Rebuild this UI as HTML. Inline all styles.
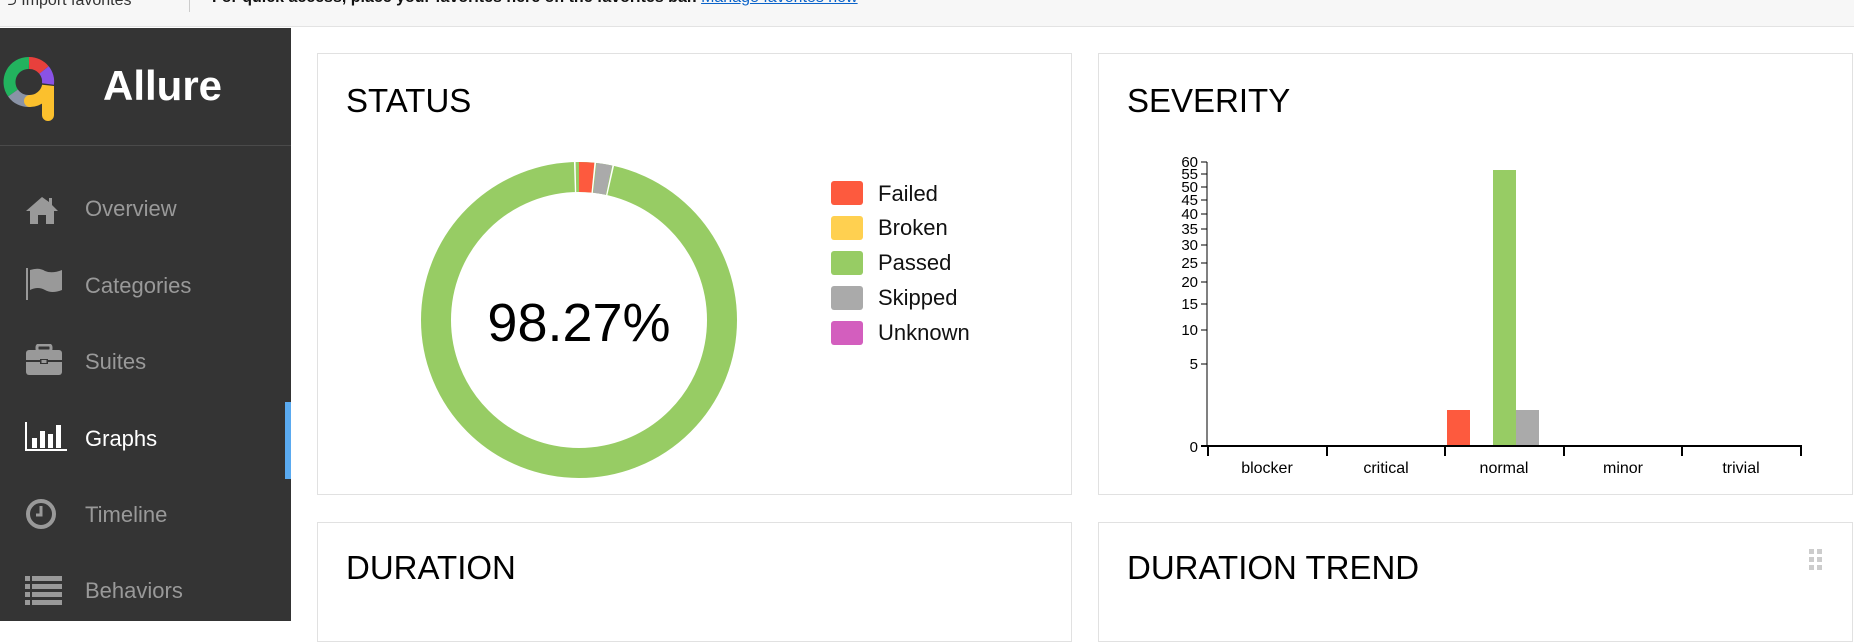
<!DOCTYPE html>
<html><head><meta charset="utf-8"><style>
*{margin:0;padding:0;box-sizing:border-box}
body{width:1854px;height:621px;overflow:hidden;background:#fff;font-family:"Liberation Sans",Arial,sans-serif;position:relative}
.top{position:absolute;left:0;top:0;width:1854px;height:27px;background:#f7f7f7;border-bottom:1px solid #e3e3e3;font-size:16px;color:#111}
.side{position:absolute;left:0;top:28px;width:291px;height:593px;background:#343434}
.nav{position:absolute;left:85px;font-size:22px;color:#999}
.card{position:absolute;border:1px solid #e1e1e1;background:#fff}
.title{position:absolute;left:28px;font-size:33px;color:#000}
.leg{position:absolute;left:831px;width:32px;height:24px;border-radius:3px}
.lt{position:absolute;left:878px;font-size:22px;color:#111}
</style></head><body>
<div class="top">
<div style="position:absolute;left:4px;top:-11px;color:#333">&#x2b8c; Import favorites</div>
<div style="position:absolute;left:189px;top:0;width:1px;height:12px;background:#ccc"></div>
<div style="position:absolute;left:212px;top:-11px;font-weight:bold">For quick access, place your favorites here on the favorites bar. <span style="color:#0b63c9;text-decoration:underline;font-weight:normal">Manage favorites now</span></div>
</div>
<div class="side">
<svg style="position:absolute;left:0;top:0" width="80" height="110" viewBox="0 28 80 110">
<path d="M29 63 A19 19 0 0 0 13 93" stroke="#22b35e" stroke-width="12" fill="none"/>
<path d="M29 63 A19 19 0 0 1 44 70" stroke="#e8403c" stroke-width="12" fill="none"/>
<path d="M44 70 A19 19 0 0 1 48 84" stroke="#8a52e6" stroke-width="12" fill="none"/>
<path d="M13 93 A19 19 0 0 0 30 101" stroke="#8a93a6" stroke-width="12" fill="none"/>
<path d="M30 101 A19 19 0 0 0 48 86 L48 115" stroke="#fbc02d" stroke-width="12" fill="none" stroke-linecap="round"/>
</svg>
<div style="position:absolute;left:103px;top:34px;font-size:42px;font-weight:bold;color:#fff">Allure</div>
<div style="position:absolute;left:0;top:117px;width:291px;height:1px;background:#4a4a4a"></div>
<svg style="position:absolute;left:25px;top:167px" width="34" height="30" viewBox="0 0 34 30"><path d="M17 2 L1 16 L5 16 L5 29 L13 29 L13 20 L21 20 L21 29 L29 29 L29 16 L33 16 L27 10 L27 3 L24 3 L24 7Z" fill="#999"/></svg>
<div class="nav" style="top:168px">Overview</div>
<svg style="position:absolute;left:25px;top:239px" width="38" height="34" viewBox="0 0 38 34"><rect x="1" y="1" width="2" height="32" fill="#999"/><path d="M5 3 Q14 0 20 4 Q27 7 37 3 L37 23 Q27 27 20 23 Q13 19 5 23Z" fill="#999"/></svg>
<div class="nav" style="top:245px">Categories</div>
<svg style="position:absolute;left:25px;top:316px" width="38" height="32" viewBox="0 0 38 32"><rect x="12" y="1" width="14" height="6" rx="2" fill="none" stroke="#999" stroke-width="3"/><rect x="1" y="6" width="36" height="25" rx="3" fill="#999"/><rect x="1" y="16" width="36" height="2" fill="#343434"/><rect x="15" y="15" width="8" height="5" fill="#343434"/><rect x="16.5" y="16" width="5" height="3" fill="#999"/></svg>
<div class="nav" style="top:321px">Suites</div>
<svg style="position:absolute;left:25px;top:394px" width="42" height="30" viewBox="0 0 42 30"><path d="M1 0 V28 H42" stroke="#fff" stroke-width="2" fill="none"/><rect x="7" y="16" width="5" height="10" fill="#fff"/><rect x="15" y="9" width="5" height="17" fill="#fff"/><rect x="23" y="12" width="5" height="14" fill="#fff"/><rect x="31" y="3" width="5" height="23" fill="#fff"/></svg>
<div class="nav" style="top:398px;color:#fff">Graphs</div>
<div style="position:absolute;left:285px;top:374px;width:6px;height:77px;background:#5aaaf0"></div>
<svg style="position:absolute;left:25px;top:470px" width="32" height="32" viewBox="0 0 32 32"><circle cx="16" cy="16" r="13" stroke="#999" stroke-width="4" fill="none"/><path d="M16 8 V17 H11" stroke="#999" stroke-width="3" fill="none"/></svg>
<div class="nav" style="top:474px">Timeline</div>
<svg style="position:absolute;left:25px;top:548px" width="38" height="30" viewBox="0 0 38 30"><g fill="#999"><rect x="0" y="0" width="5" height="5"/><rect x="7" y="0" width="30" height="5"/><rect x="0" y="8" width="5" height="5"/><rect x="7" y="8" width="30" height="5"/><rect x="0" y="16" width="5" height="5"/><rect x="7" y="16" width="30" height="5"/><rect x="0" y="24" width="5" height="5"/><rect x="7" y="24" width="30" height="5"/></g></svg>
<div class="nav" style="top:550px">Behaviors</div>
</div>

<div class="card" style="left:317px;top:53px;width:755px;height:442px">
<div class="title" style="top:28px">STATUS</div>
</div>
<svg style="position:absolute;left:0;top:0" width="1854" height="621">
<circle cx="579" cy="320" r="143" fill="none" stroke="#97cc64" stroke-width="30"/>
<g transform="rotate(-90 579 320)">
<circle cx="579" cy="320" r="143" fill="none" stroke="#fd5a3e" stroke-width="30" stroke-dasharray="14 1000"/>
<circle cx="579" cy="320" r="143" fill="none" stroke="#aaa" stroke-width="30" stroke-dasharray="0 16 14 1000"/>
<circle cx="579" cy="320" r="143" fill="none" stroke="#fff" stroke-width="31" stroke-dasharray="0 14 1.5 15 1.5 1000"/>
<circle cx="579" cy="320" r="143" fill="none" stroke="#fff" stroke-width="31" stroke-dasharray="0 893.5 1.5 10"/>
</g>
<text x="579" y="341" font-size="54" text-anchor="middle" font-family="Liberation Sans" fill="#000">98.27%</text>
</svg>
<div class="leg" style="top:181px;background:#fd5a3e"></div><div class="lt" style="top:181px">Failed</div>
<div class="leg" style="top:216px;background:#ffd050"></div><div class="lt" style="top:215px">Broken</div>
<div class="leg" style="top:251px;background:#97cc64"></div><div class="lt" style="top:250px">Passed</div>
<div class="leg" style="top:286px;background:#aaa"></div><div class="lt" style="top:285px">Skipped</div>
<div class="leg" style="top:321px;background:#d35ebe"></div><div class="lt" style="top:320px">Unknown</div>

<div class="card" style="left:1098px;top:53px;width:755px;height:442px">
<div class="title" style="top:28px">SEVERITY</div>
</div>
<svg style="position:absolute;left:0;top:0" width="1854" height="621" font-family="Liberation Sans" font-size="15">
<g fill="#000" text-anchor="end">
<line x1="1207" y1="162" x2="1207" y2="446" stroke="#000"/>
<g stroke="#000">
<line x1="1201" y1="162" x2="1207" y2="162"/><line x1="1201" y1="174" x2="1207" y2="174"/><line x1="1201" y1="187" x2="1207" y2="187"/><line x1="1201" y1="200" x2="1207" y2="200"/><line x1="1201" y1="214" x2="1207" y2="214"/><line x1="1201" y1="229" x2="1207" y2="229"/><line x1="1201" y1="245" x2="1207" y2="245"/><line x1="1201" y1="263" x2="1207" y2="263"/><line x1="1201" y1="282" x2="1207" y2="282"/><line x1="1201" y1="304" x2="1207" y2="304"/><line x1="1201" y1="330" x2="1207" y2="330"/><line x1="1201" y1="364" x2="1207" y2="364"/>
</g>
<text x="1198" y="167">60</text><text x="1198" y="179">55</text><text x="1198" y="192">50</text><text x="1198" y="205">45</text><text x="1198" y="219">40</text><text x="1198" y="234">35</text><text x="1198" y="250">30</text><text x="1198" y="268">25</text><text x="1198" y="287">20</text><text x="1198" y="309">15</text><text x="1198" y="335">10</text><text x="1198" y="369">5</text><text x="1198" y="452">0</text>
</g>
<line x1="1201" y1="446" x2="1802" y2="446" stroke="#000" stroke-width="2"/>
<g stroke="#000" stroke-width="2"><line x1="1208" y1="446" x2="1208" y2="456"/><line x1="1327" y1="446" x2="1327" y2="456"/><line x1="1445" y1="446" x2="1445" y2="456"/><line x1="1564" y1="446" x2="1564" y2="456"/><line x1="1682" y1="446" x2="1682" y2="456"/><line x1="1801" y1="446" x2="1801" y2="456"/></g>
<g text-anchor="middle" font-size="16"><text x="1267" y="473">blocker</text><text x="1386" y="473">critical</text><text x="1504" y="473">normal</text><text x="1623" y="473">minor</text><text x="1741" y="473">trivial</text></g>
<rect x="1447" y="410" width="23" height="35" fill="#fd5a3e"/>
<rect x="1493" y="170" width="23" height="275" fill="#97cc64"/>
<rect x="1516" y="410" width="23" height="35" fill="#aaa"/>
</svg>

<div class="card" style="left:317px;top:522px;width:755px;height:120px">
<div class="title" style="top:26px">DURATION</div>
</div>
<div class="card" style="left:1098px;top:522px;width:755px;height:120px">
<div class="title" style="top:26px">DURATION TREND</div>
</div>
<svg style="position:absolute;left:1809px;top:549px" width="14" height="22"><g fill="#ccc"><rect x="0" y="0" width="5" height="5"/><rect x="8" y="0" width="5" height="5"/><rect x="0" y="8" width="5" height="5"/><rect x="8" y="8" width="5" height="5"/><rect x="0" y="16" width="5" height="5"/><rect x="8" y="16" width="5" height="5"/></g></svg>
</body></html>
